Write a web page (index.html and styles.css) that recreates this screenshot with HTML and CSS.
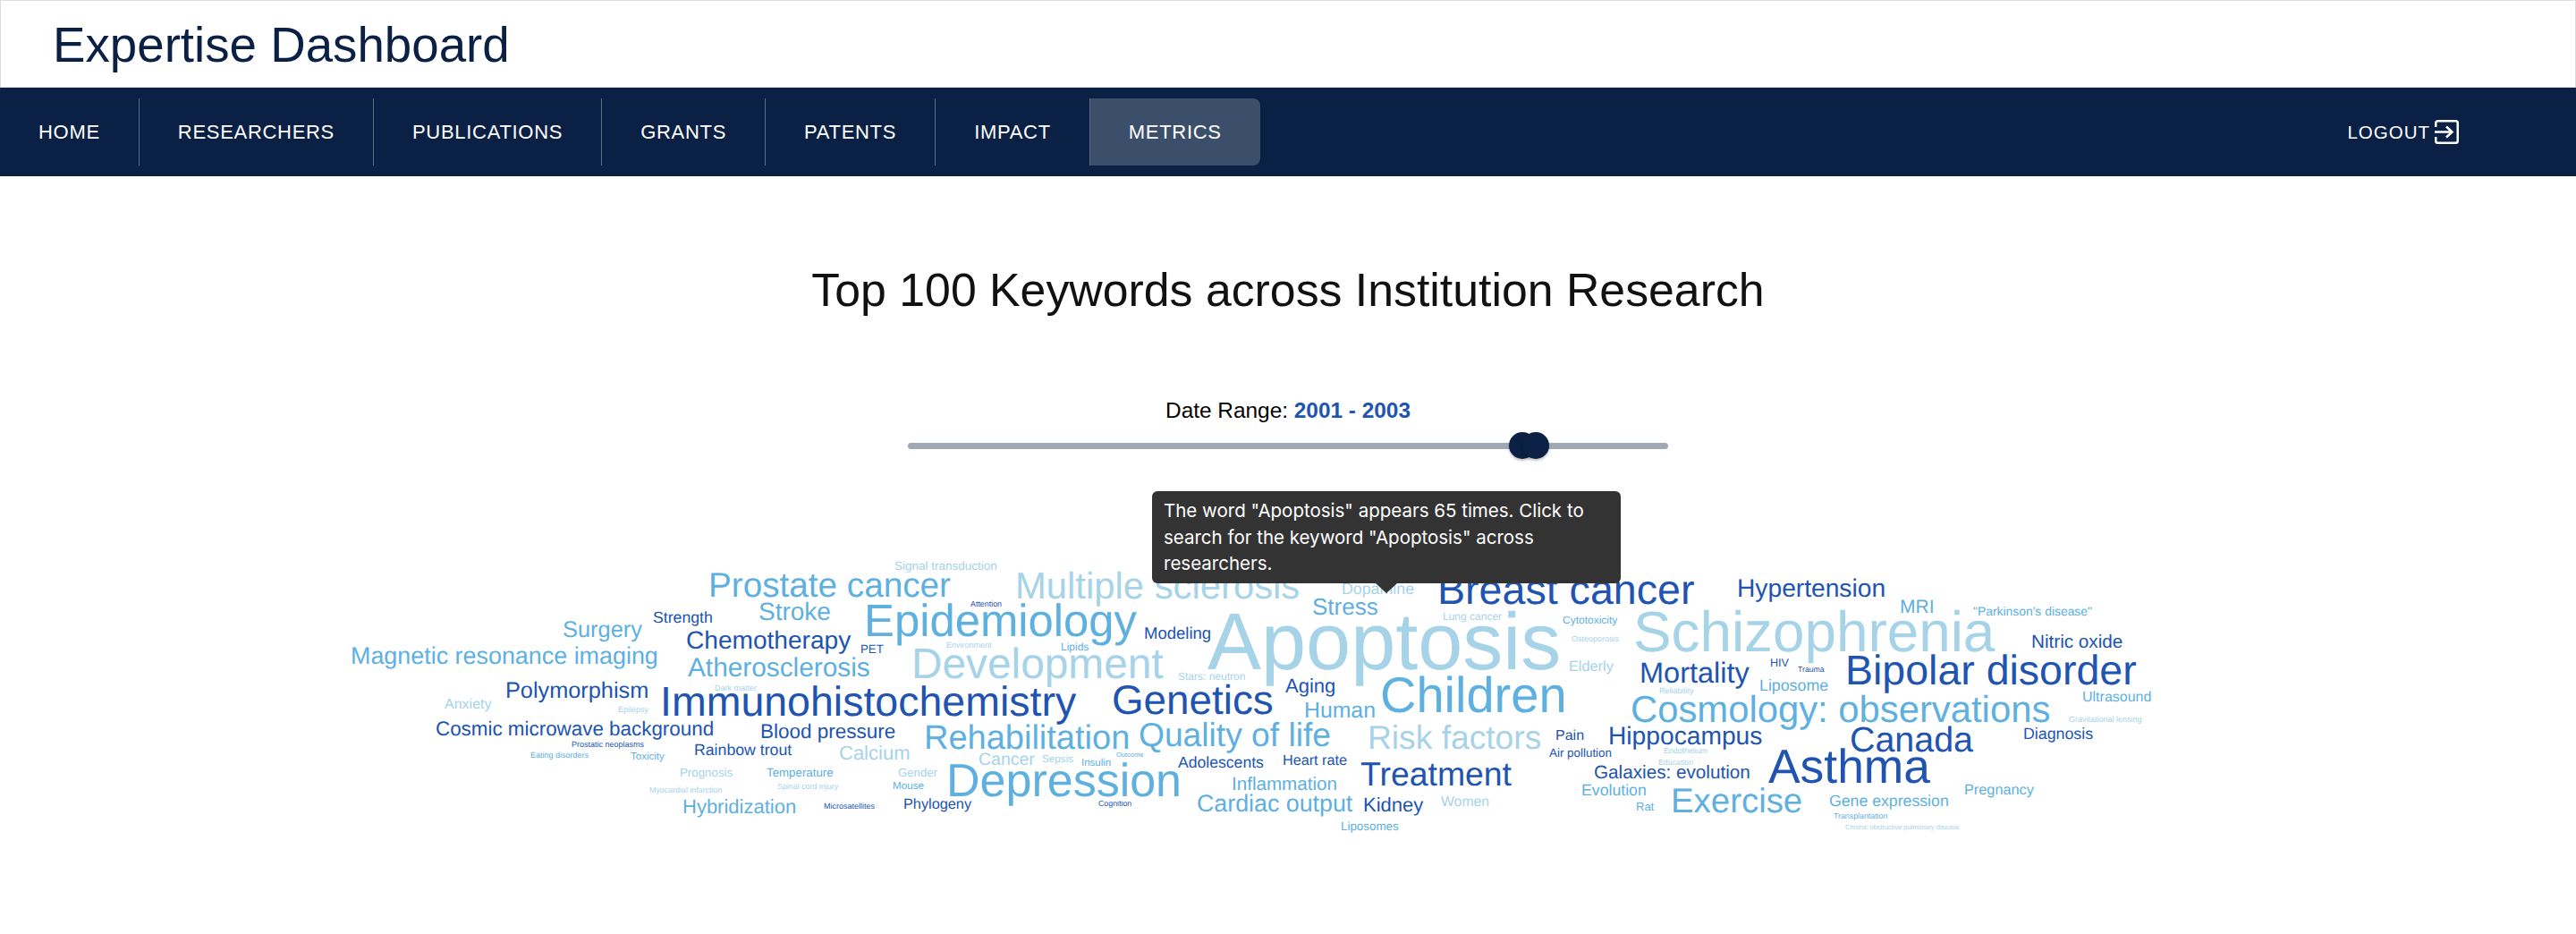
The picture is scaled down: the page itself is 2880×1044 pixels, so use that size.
FILE: index.html
```html
<!DOCTYPE html>
<html lang="en">
<head>
    <meta charset="UTF-8">
    <title>Expertise Dashboard</title>
    <link rel="stylesheet" href="styles.css">
</head>
<body>
    <header class="site-header">
        <div class="site-title">Expertise Dashboard</div>
    </header>

    <nav class="main-nav">
        <ul class="nav-list">
            <li class="nav-item">HOME</li>
            <li class="nav-item">RESEARCHERS</li>
            <li class="nav-item">PUBLICATIONS</li>
            <li class="nav-item">GRANTS</li>
            <li class="nav-item">PATENTS</li>
            <li class="nav-item">IMPACT</li>
            <li class="nav-item nav-item-active">METRICS</li>
        </ul>
        <div class="logout">
            <span>LOGOUT</span>
            <svg class="logout-icon" viewBox="0 0 27 27" fill="none" stroke="currentColor" stroke-width="2.5">
                <path d="M1.25 8V3.5a2.25 2.25 0 0 1 2.25-2.25h20a2.25 2.25 0 0 1 2.25 2.25v20a2.25 2.25 0 0 1-2.25 2.25h-20a2.25 2.25 0 0 1-2.25-2.25V19"/>
                <path d="M0 13.5h19M13 7.5l6.5 6-6.5 6"/>
            </svg>
        </div>
    </nav>

    <main class="content">
        <h1 class="page-title">Top 100 Keywords across Institution Research</h1>

        <div class="date-range">Date Range: <strong>2001 - 2003</strong></div>
        <div class="slider">
            <div class="slider-track"></div>
            <div class="slider-thumb thumb-start"></div>
            <div class="slider-thumb thumb-end"></div>
        </div>

        <div class="cloud">
            <svg class="cloud-svg" viewBox="0 600 2880 344">
                <text class="m" x="792" y="667" font-size="38.7">Prostate cancer</text>
                <text class="m" x="629" y="712" font-size="25.4">Surgery</text>
                <text class="m" x="392" y="742" font-size="26.9">Magnetic resonance imaging</text>
                <text class="d" x="730" y="696" font-size="17.7">Strength</text>
                <text class="d" x="767" y="725" font-size="28.1">Chemotherapy</text>
                <text class="m" x="769" y="756" font-size="29.8">Atherosclerosis</text>
                <text class="d" x="565" y="780" font-size="25.3">Polymorphism</text>
                <text class="d" x="738" y="800" font-size="46.5">Immunohistochemistry</text>
                <text class="l" x="799" y="772" font-size="9">Dark matter</text>
                <text class="l" x="497" y="792" font-size="16">Anxiety</text>
                <text class="l" x="691" y="796" font-size="9">Epilepsy</text>
                <text class="d" x="487" y="822" font-size="22.4">Cosmic microwave background</text>
                <text class="d" x="639" y="835" font-size="9">Prostatic neoplasms</text>
                <text class="m" x="593" y="847" font-size="9">Eating disorders</text>
                <text class="m" x="705" y="849" font-size="11.5">Toxicity</text>
                <text class="d" x="776" y="844" font-size="17.7">Rainbow trout</text>
                <text class="l" x="760" y="868" font-size="13.3">Prognosis</text>
                <text class="l" x="726" y="886" font-size="8.9">Myocardial infarction</text>
                <text class="m" x="763" y="909" font-size="22">Hybridization</text>

                <text class="l" x="1000" y="637" font-size="13.5">Signal transduction</text>
                <text class="m" x="848" y="693" font-size="28">Stroke</text>
                <text class="m" x="966" y="711" font-size="50.8">Epidemiology</text>
                <text class="d" x="1085" y="678" font-size="8.9">Attention</text>
                <text class="l" x="1135" y="669" font-size="41.8">Multiple sclerosis</text>
                <text class="d" x="1279" y="714" font-size="18.5">Modeling</text>
                <text class="d" x="962" y="730" font-size="13.3">PET</text>
                <text class="l" x="1058" y="724" font-size="9">Environment</text>
                <text class="m" x="1186" y="727" font-size="12">Lipids</text>
                <text class="l" x="1019" y="758" font-size="47.8">Development</text>
                <text class="d" x="1243" y="798" font-size="45.8">Genetics</text>
                <text class="d" x="850" y="825" font-size="22.5">Blood pressure</text>
                <text class="m" x="1033" y="837" font-size="38">Rehabilitation</text>
                <text class="m" x="1273" y="834" font-size="37.2">Quality of life</text>
                <text class="l" x="938" y="849" font-size="22">Calcium</text>
                <text class="l" x="1094" y="855" font-size="19.5">Cancer</text>
                <text class="l" x="1165" y="852" font-size="11.7">Sepsis</text>
                <text class="m" x="1209" y="856" font-size="11.5">Insulin</text>
                <text class="m" x="1248" y="846" font-size="7.5">Outcome</text>
                <text class="d" x="1317" y="858" font-size="17.6">Adolescents</text>
                <text class="m" x="1058" y="890" font-size="52">Depression</text>
                <text class="m" x="857" y="868" font-size="13.3">Temperature</text>
                <text class="l" x="1004" y="868" font-size="13.2">Gender</text>
                <text class="l" x="869" y="882" font-size="8.9">Spinal cord injury</text>
                <text class="m" x="998" y="882" font-size="11.7">Mouse</text>
                <text class="d" x="1010" y="904" font-size="16.3">Phylogeny</text>
                <text class="d" x="921" y="904" font-size="9">Microsatellites</text>
                <text class="d" x="1228" y="901" font-size="8.8">Cognition</text>
                <text class="m" x="1338" y="907" font-size="26.8">Cardiac output</text>
                <text class="l" x="1317" y="760" font-size="12">Stars: neutron</text>

                <text class="l" x="1500" y="664" font-size="17.8">Dopamine</text>
                <text class="m" x="1467" y="687" font-size="26">Stress</text>
                <text class="d" x="1607" y="675" font-size="46.6">Breast cancer</text>
                <text class="l" x="1350" y="748" font-size="90">Apoptosis</text>
                <text class="l" x="1613" y="693" font-size="12">Lung cancer</text>
                <text class="m" x="1747" y="697" font-size="12">Cytotoxicity</text>
                <text class="l" x="1757" y="717" font-size="9">Osteoporosis</text>
                <text class="l" x="1754" y="750" font-size="16.3">Elderly</text>
                <text class="d" x="1437" y="774" font-size="22">Aging</text>
                <text class="m" x="1458" y="802" font-size="24.8">Human</text>
                <text class="m" x="1543" y="796" font-size="56">Children</text>
                <text class="l" x="1529" y="837" font-size="37.2">Risk factors</text>
                <text class="d" x="1739" y="827" font-size="16">Pain</text>
                <text class="d" x="1798" y="832" font-size="28.2">Hippocampus</text>
                <text class="d" x="1732" y="846" font-size="13.4">Air pollution</text>
                <text class="d" x="1434" y="855" font-size="16.2">Heart rate</text>
                <text class="d" x="1521" y="878" font-size="37.4">Treatment</text>
                <text class="m" x="1377" y="883" font-size="20.6">Inflammation</text>
                <text class="d" x="1524" y="907" font-size="22">Kidney</text>
                <text class="l" x="1611" y="901" font-size="15.8">Women</text>
                <text class="m" x="1499" y="928" font-size="13.4">Liposomes</text>
                <text class="d" x="1782" y="870" font-size="20.7">Galaxies: evolution</text>
                <text class="m" x="1768" y="889" font-size="17.7">Evolution</text>
                <text class="m" x="1829" y="906" font-size="13">Rat</text>

                <text class="d" x="1942" y="667" font-size="28.2">Hypertension</text>
                <text class="m" x="2124" y="685" font-size="21">MRI</text>
                <text class="m" x="2206" y="688" font-size="13.9">"Parkinson's disease"</text>
                <text class="l" x="1826" y="728" font-size="63.8">Schizophrenia</text>
                <text class="d" x="2271" y="724" font-size="20.7">Nitric oxide</text>
                <text class="d" x="1833" y="763" font-size="32.5">Mortality</text>
                <text class="d" x="1979" y="745" font-size="12.6">HIV</text>
                <text class="d" x="2010" y="751" font-size="8.7">Trauma</text>
                <text class="m" x="1967" y="772" font-size="17.8">Liposome</text>
                <text class="d" x="2063" y="765" font-size="46.5">Bipolar disorder</text>
                <text class="l" x="1855" y="775" font-size="9">Reliability</text>
                <text class="m" x="2328" y="784" font-size="16">Ultrasound</text>
                <text class="m" x="1823" y="807" font-size="41.8">Cosmology: observations</text>
                <text class="l" x="2313" y="807" font-size="9">Gravitational lensing</text>
                <text class="d" x="2068" y="840" font-size="39.4">Canada</text>
                <text class="d" x="2262" y="826" font-size="17.8">Diagnosis</text>
                <text class="l" x="1860" y="842" font-size="8.8">Endothelium</text>
                <text class="l" x="1854" y="855" font-size="8.8">Education</text>
                <text class="d" x="1977" y="875" font-size="53.4">Asthma</text>
                <text class="m" x="1868" y="908" font-size="38.4">Exercise</text>
                <text class="m" x="2045" y="901" font-size="17.7">Gene expression</text>
                <text class="m" x="2196" y="888" font-size="16.3">Pregnancy</text>
                <text class="m" x="2050" y="915" font-size="8.8">Transplantation</text>
                <text class="l" x="2063" y="927" font-size="7.4">Chronic obstructive pulmonary disease</text>
            </svg>

            <!-- tooltip for the hovered word -->
            <div class="tooltip">The word "Apoptosis" appears 65 times. Click to search for the keyword "Apoptosis" across researchers.</div>
        </div>
    </main>
</body>
</html>
```

FILE: styles.css
```css
body {
    font-family: "Liberation Sans", Arial, sans-serif;
    margin: 0;
    background-color: white;
}

.site-header {
    box-sizing: border-box;
    height: 98px;
    padding-left: 58px;
    border: 1px solid #ddd;
    display: flex;
    align-items: center;
}

.site-title {
    font-size: 54.7px;
    line-height: 1;
    color: #0a2044;
    margin-top: 2px;
}

.main-nav {
    box-sizing: border-box;
    height: 99px;
    padding: 12px 0;
    background-color: #0a2044;
    color: white;
    display: flex;
    justify-content: space-between;
    align-items: center;
}

.nav-list {
    list-style: none;
    margin: 0;
    padding: 0;
    display: flex;
    height: 75px;
}

.nav-item {
    padding: 0 43px;
    display: flex;
    align-items: center;
    font-size: 22px;
    letter-spacing: 0.7px;
    border-right: 1px solid #5b6b84;
}

.nav-item-active {
    background-color: #3c4f6a;
    border-right: none;
    border-radius: 0 8px 8px 0;
}

.logout {
    display: flex;
    align-items: center;
    gap: 5px;
    margin-right: 131px;
    font-size: 20.5px;
    letter-spacing: 1px;
}

.logout-icon {
    width: 27px;
    height: 27px;
}

.page-title {
    margin: 97px 0 0;
    font-size: 51.8px;
    line-height: 60px;
    font-weight: normal;
    text-align: center;
    color: #111;
}

.date-range {
    margin-top: 90px;
    font-size: 24.4px;
    line-height: 30px;
    text-align: center;
    color: black;
}

.date-range strong {
    color: #2054b0;
}

.slider {
    position: relative;
    width: 850px;
    height: 30px;
    margin: 9px auto 0;
}

.slider-track {
    position: absolute;
    left: 0;
    right: 0;
    top: 12px;
    height: 7px;
    border-radius: 4px;
    background-color: #a1a9b5;
}

.slider-thumb {
    position: absolute;
    top: 0;
    width: 30px;
    height: 30px;
    border-radius: 50%;
    background-color: #0a2044;
    box-shadow: 0 2px 3px rgba(0, 0, 0, 0.25);
}

.thumb-start {
    left: 672px;
}

.thumb-end {
    left: 687px;
}

.cloud {
    position: relative;
    margin-top: 87px;
    height: 344px;
}

.cloud-svg {
    display: block;
    width: 2880px;
    height: 344px;
    text-rendering: geometricPrecision;
}

.d {
    fill: #2054b0;
}

.m {
    fill: #5eb0e0;
}

.l {
    fill: #a6d3e8;
}

/* tooltip over the word cloud */
.tooltip {
    position: absolute;
    left: 1288px;
    top: -51px;
    box-sizing: border-box;
    width: 524px;
    height: 103px;
    padding: 7px 13px;
    background-color: #333;
    color: white;
    border-radius: 6px;
    font-family: Inter, sans-serif;
    font-size: 20.5px;
    line-height: 29.5px;
}

.tooltip::after {
    content: "";
    position: absolute;
    left: 250px;
    top: 103px;
    border-left: 12px solid transparent;
    border-right: 12px solid transparent;
    border-top: 11px solid #333;
}
```
